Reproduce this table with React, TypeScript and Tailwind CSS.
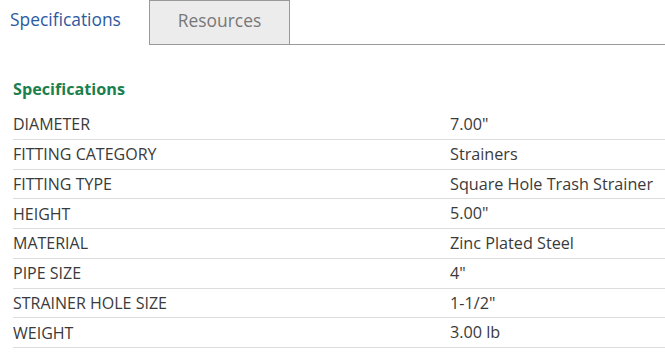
import React from "react";

const specs: [string, string][] = [
  ["DIAMETER", '7.00"'],
  ["FITTING CATEGORY", "Strainers"],
  ["FITTING TYPE", "Square Hole Trash Strainer"],
  ["HEIGHT", '5.00"'],
  ["MATERIAL", "Zinc Plated Steel"],
  ["PIPE SIZE", '4"'],
  ["STRAINER HOLE SIZE", '1-1/2"'],
  ["WEIGHT", "3.00 lb"],
];

export default function App() {
  return (
    <div className="w-[665px] h-[354px] bg-white overflow-hidden font-['Open_Sans',sans-serif]">
      <div className="flex h-[45px]">
        <div className="w-[149px] pl-[10px] pt-[6px] text-[17.4px] leading-[26px] text-[#2c5aa0]">
          Specifications
        </div>
        <div className="w-[141px] border border-[#999] bg-[#ececec] flex justify-center pt-[6px] text-[17.4px] leading-[26px] text-[#777]">
          Resources
        </div>
        <div className="flex-1 border-b border-[#999]" />
      </div>

      <div className="pl-[13px]">
        <h3 className="pt-[32px] pb-[8px] text-[16.2px] leading-[25px] font-bold text-[#1b7f4e]">
          Specifications
        </h3>
        <div>
          {specs.map(([label, value]) => (
            <div
              key={label}
              className="flex h-[29.75px] items-center border-b border-[#ddd] text-[16px] text-[#3a3a3a]"
            >
              <div className="w-[437px]">{label}</div>
              <div className="text-[16.2px]">{value}</div>
            </div>
          ))}
        </div>
      </div>
    </div>
  );
}
